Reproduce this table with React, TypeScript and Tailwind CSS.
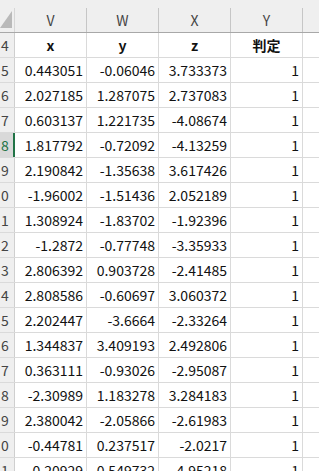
const cols = ["V", "W", "X", "Y"];

const rows: string[][] = [
  ["0.443051", "-0.06046", "3.733373", "1"],
  ["2.027185", "1.287075", "2.737083", "1"],
  ["0.603137", "1.221735", "-4.08674", "1"],
  ["1.817792", "-0.72092", "-4.13259", "1"],
  ["2.190842", "-1.35638", "3.617426", "1"],
  ["-1.96002", "-1.51436", "2.052189", "1"],
  ["1.308924", "-1.83702", "-1.92396", "1"],
  ["-1.2872", "-0.77748", "-3.35933", "1"],
  ["2.806392", "0.903728", "-2.41485", "1"],
  ["2.808586", "-0.60697", "3.060372", "1"],
  ["2.202447", "-3.6664", "-2.33264", "1"],
  ["1.344837", "3.409193", "2.492806", "1"],
  ["0.363111", "-0.93026", "-2.95087", "1"],
  ["-2.30989", "1.183278", "3.284183", "1"],
  ["2.380042", "-2.05866", "-2.61983", "1"],
  ["-0.44781", "0.237517", "-2.0217", "1"],
  ["-0.20929", "0.549732", "-4.95218", "1"],
];

const font = { fontFamily: '"Noto Sans CJK JP", "Noto Sans", sans-serif' };

// row header is scrolled off to the left, only the last digit shows
function RowHead({ n, active }: { n: number; active?: boolean }) {
  return (
    <div
      className={
        "relative w-[15px] shrink-0 border-r flex items-center pl-[1px] text-[14px] " +
        (active ? "bg-[#d9d9d9] text-[#217346] border-[#217346]" : "bg-[#efefef] text-[#444] border-[#cfcfcf]")
      }
    >
      {active && <div className="absolute right-0 top-0 bottom-0 w-[1px] bg-[#217346]" />}
      {n % 10}
    </div>
  );
}

export default function App() {
  return (
    <div className="w-[319px] h-[471px] overflow-hidden bg-white text-[#111]" style={font}>
      {/* column headers */}
      <div className="flex h-[33px] bg-[#efefef] border-b border-[#a8a8a8]">
        <div className="relative w-[15px] shrink-0 flex flex-col">
          <div className="h-[8px]" />
          <div className="flex-1 border-r border-[#d6d6d6]">
            <svg width="14" height="24" className="block">
              <polygon points="0,20 12,20 12,3" fill="#b9b9b9" />
            </svg>
          </div>
        </div>
        {cols.map((c) => (
          <div key={c} className="w-[72px] shrink-0 flex flex-col">
            <div className="h-[8px]" />
            <div className="flex-1 border-r border-[#c6c6c6] flex items-center justify-center text-[14px] text-[#444]">
              {c}
            </div>
          </div>
        ))}
        <div className="flex-1" />
      </div>

      {/* title row */}
      <div className="flex h-[25px] border-b border-[#dadada]">
        <RowHead n={14} />
        {["x", "y", "z", "判定"].map((t) => (
          <div
            key={t}
            className="w-[72px] shrink-0 border-r border-[#dadada] flex items-center justify-center text-[14px] font-bold"
          >
            {t}
          </div>
        ))}
        <div className="flex-1" />
      </div>

      {rows.map((r, i) => (
        <div key={i} className="flex h-[25px] border-b border-[#dadada]">
          <RowHead n={15 + i} active={i === 3} />
          {r.map((v, j) => (
            <div
              key={j}
              className="w-[72px] shrink-0 border-r border-[#dadada] flex items-center justify-end pr-[3px] text-[14px] whitespace-nowrap"
            >
              {v}
            </div>
          ))}
          <div className="flex-1" />
        </div>
      ))}
    </div>
  );
}
